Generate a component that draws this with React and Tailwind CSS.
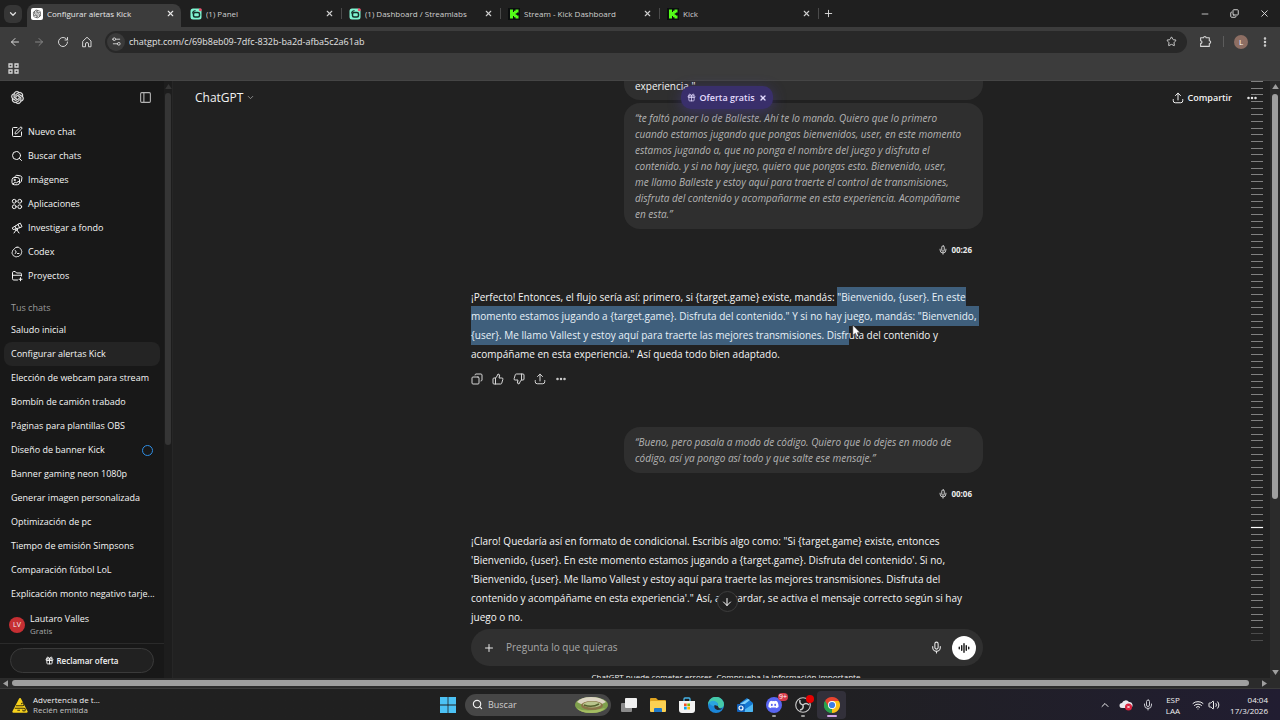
/**
 * ============================================================
 * Escritorio con Chrome abierto en ChatGPT
 * Barra de pestañas, barra de direcciones, chat y barra de tareas.
 * ============================================================
 */
import React, { useState } from "react";
import clsx from "clsx";
import { RiOpenaiFill } from "react-icons/ri";
import { FaDiscord } from "react-icons/fa";
import {
  ArrowDown,
  ArrowLeft,
  ArrowRight,
  ChevronDown,
  ChevronUp,
  Copy,
  Ellipsis,
  EllipsisVertical,
  Gift,
  Mic,
  Minus,
  PanelLeft,
  Plus,
  RotateCw,
  Search,
  Settings2,
  SquarePen,
  Star,
  ThumbsDown,
  ThumbsUp,
  Volume2,
  Wifi,
  X,
} from "lucide-react";

// ─── Datos ───
const TABS = [
  { title: "Configurar alertas Kick", icon: "openai" },
  { title: "(1) Panel", icon: "streamlabs" },
  { title: "(1) Dashboard / Streamlabs", icon: "streamlabs" },
  { title: "Stream - Kick Dashboard", icon: "kick" },
  { title: "Kick", icon: "kick" },
];

const CHATS = [
  "Saludo inicial",
  "Configurar alertas Kick",
  "Elección de webcam para stream",
  "Bombín de camión trabado",
  "Páginas para plantillas OBS",
  "Diseño de banner Kick",
  "Banner gaming neon 1080p",
  "Generar imagen personalizada",
  "Optimización de pc",
  "Tiempo de emisión Simpsons",
  "Comparación fútbol LoL",
  "Explicación monto negativo tarje...",
];

const MARKS = Array.from({ length: 85 }, (_, i) => i);

// ─── Iconos propios ───
function Svg({ children, className = "size-3", ...rest }) {
  return (
    <svg
      viewBox="0 0 24 24"
      fill="none"
      stroke="currentColor"
      strokeWidth="2"
      strokeLinecap="round"
      strokeLinejoin="round"
      className={clsx("shrink-0", className)}
      aria-hidden="true"
      {...rest}
    >
      {children}
    </svg>
  );
}

function ShareIcon() {
  return (
    <Svg>
      <path d="M12 16V2.500M7 7l5-4.700L17 7" />
      <path d="M2.500 15v2.500a4 4 0 0 0 4 4h11a4 4 0 0 0 4-4V15" />
    </Svg>
  );
}

function HomeIcon() {
  return (
    <Svg>
      <path d="M4 10l8-7.500 8 7.500v11.500h-5V16a3 3 0 0 0-6 0v5.500H4z" />
    </Svg>
  );
}

function ExtensionIcon() {
  return (
    <Svg className="size-[13px]">
      <path d="M3 5h5.500a2.300 2.300 0 0 1 4.600 0H19v5.500a2.600 2.600 0 0 1 0 5.200V21H3v-5.500a2.500 2.500 0 0 0 0-5z" />
    </Svg>
  );
}

function ImagesIcon() {
  return (
    <Svg>
      <path d="M8 5.500C8.400 3.600 10 2.400 12 2.700l6.600 1c2.200.4 3.500 2 3.200 4.200l-.9 6.100c-.3 1.800-1.400 2.900-3 3.100" />
      <rect x="2" y="7" width="15" height="14.500" rx="4.500" />
      <circle cx="7.200" cy="12" r="1.300" />
      <path d="M4 19.500l4.500-3 3 1.500 2.500-3.500 3 2" />
    </Svg>
  );
}

function AppsIcon() {
  return (
    <Svg>
      <circle cx="6.500" cy="6.500" r="3.800" />
      <circle cx="17.500" cy="6.500" r="3.800" />
      <circle cx="6.500" cy="17.500" r="3.800" />
      <circle cx="17.500" cy="17.500" r="3.800" />
    </Svg>
  );
}

function TelescopeIcon() {
  return (
    <Svg>
      <path d="M14.500 4.500l4-2.200 3.500 7-4 1.900z" />
      <path d="M14.500 4.500L8 8.500l2.500 5 7.500-2.300M8 8.500l-5.500 3.200 1.800 3.600 6.200-1.800" />
      <circle cx="11" cy="15" r="1.800" />
      <path d="M9.800 16.500L6 22M12.200 16.500L16 22" />
    </Svg>
  );
}

function CodexIcon() {
  return (
    <Svg>
      <path d="M12 2.500c2-.8 4 .1 5 1.700 2 .4 3.400 2 3.300 4 1.500 1.600 1.700 3.900.5 5.600.2 2.100-1 4-3 4.700-.9 1.900-2.900 2.900-4.900 2.500-1.700 1.100-4 .9-5.500-.5-2.100-.1-3.800-1.700-4-3.700-1.500-1.500-1.700-3.800-.6-5.500-.1-2.100 1.200-3.900 3.200-4.500 1.200-2.700 3.600-4.700 6-4.300z" />
      <path d="M8.500 9l2 3-2 3M13 15h3" />
    </Svg>
  );
}

function ProjectsIcon() {
  return (
    <Svg>
      <path d="M13 20H5.500A2.500 2.500 0 0 1 3 17.500v-12A2.500 2.500 0 0 1 5.500 3h3l2.500 3h7.500A2.500 2.500 0 0 1 21 8.500V12" />
      <path d="M3 10.500h18M19 15.500v6M16 18.500h6" />
    </Svg>
  );
}

function Favicon({ name }) {
  if (name === "openai") {
    return (
      <span className="flex size-3 shrink-0 items-center justify-center rounded-xs bg-white text-[#333]">
        <RiOpenaiFill className="size-[10px]" />
      </span>
    );
  }
  if (name === "streamlabs") {
    return (
      <svg viewBox="0 0 24 24" className="size-3 shrink-0" aria-hidden="true">
        <rect x="1" y="1" width="22" height="22" rx="5" fill="#80f5d2" />
        <path d="M5 11a7 7 0 0 1 6-6" stroke="#15302a" strokeWidth="2.500" fill="none" />
        <rect x="7" y="9" width="12" height="9" rx="3" fill="none" stroke="#15302a" strokeWidth="3" />
        <circle cx="20.500" cy="3.500" r="3" fill="#f0506e" />
      </svg>
    );
  }
  return (
    <svg viewBox="0 0 24 24" className="size-3 shrink-0" aria-hidden="true">
      <rect width="24" height="24" fill="#0b0e0f" />
      <path d="M4 3h6v5h2V5.500h3V3h6v6h-3v1.500h-2.500v3H18V15h3v6h-6v-2.500h-3V16h-2v5H4z" fill="#53fc18" />
    </svg>
  );
}

function VoiceBars() {
  return (
    <Svg className="size-3" strokeWidth="2.600">
      <path d="M2.500 10.500v3M7.500 7.500v9M12 3.500v17M16.500 7.500v9M21.500 10.500v3" />
    </Svg>
  );
}

// ─── Navegador ───
function TabStrip() {
  return (
    <header className="flex h-[27px] shrink-0 items-center bg-[#1f1f1f] text-[#dedede]">
      <button aria-label="Buscar pestañas" className="ml-1 mr-[5px] flex size-[18px] shrink-0 items-center justify-center rounded-md bg-[#363636]">
        <ChevronDown className="size-[10px]" strokeWidth={3} />
      </button>
      {TABS.map((tab, i) => (
        <div key={tab.title} className="flex h-full w-[159px] min-w-0 items-end">
          <div
            className={clsx(
              "flex h-[23px] w-[154px] items-center rounded-t-lg pb-1 pl-1 pr-1.5 text-[8px]",
              i === 0 ? "bg-[#3c3c3c] text-[#e8e8e8]" : "text-[#cfcfcf]"
            )}
          >
            <Favicon name={tab.icon} />
            <span className="ml-1 flex-1 truncate">{tab.title}</span>
            <button aria-label={`Cerrar ${tab.title}`}>
              <X className="size-[9px]" strokeWidth={3} />
            </button>
          </div>
          {i > 0 && <span className="mb-2 ml-px h-[11px] w-px bg-[#4a4a4a]" />}
        </div>
      ))}
      <button aria-label="Nueva pestaña" className="ml-px">
        <Plus className="size-[11px]" strokeWidth={2} />
      </button>
      <div className="ml-auto mr-[10px] flex items-center gap-5">
        <button aria-label="Minimizar"><Minus className="size-[10px]" /></button>
        <button aria-label="Restaurar"><Copy className="size-[9px] -scale-x-100 rotate-180" strokeWidth={2.5} /></button>
        <button aria-label="Cerrar"><X className="size-[11px]" /></button>
      </div>
    </header>
  );
}

function Toolbar() {
  return (
    <div className="shrink-0 border-b border-[#454545] bg-[#3c3c3c] text-[#d6d6d6]">
      <div className="flex h-[29px] items-center pl-[9px] pr-[9px]">
        <div className="flex items-center gap-3">
          <button aria-label="Atrás"><ArrowLeft className="size-3" /></button>
          <button aria-label="Adelante" className="text-[#858585]"><ArrowRight className="size-3" /></button>
          <button aria-label="Recargar"><RotateCw className="size-3" /></button>
          <button aria-label="Inicio"><HomeIcon /></button>
        </div>
        <label className="ml-3 flex h-[22px] flex-1 items-center rounded-full bg-[#282828] pl-0.5">
          <span className="flex size-[18px] items-center justify-center rounded-full bg-[#3a3a3a]">
            <Settings2 className="size-[11px] rotate-180" />
          </span>
          <input
            aria-label="Dirección"
            defaultValue="chatgpt.com/c/69b8eb09-7dfc-832b-ba2d-afba5c2a61ab"
            className="ml-1 flex-1 bg-transparent text-[9px] text-[#e3e3e3] outline-none"
          />
          <button aria-label="Añadir a favoritos" className="mr-[10px]">
            <Star className="size-[11px]" />
          </button>
        </label>
        <button aria-label="Extensiones" className="ml-3"><ExtensionIcon /></button>
        <span className="ml-[11px] mr-[10px] h-[11px] w-px bg-[#5c5c5c]" />
        <button aria-label="Perfil" className="flex size-[14px] items-center justify-center rounded-full bg-[#8d6e63] text-[8px] text-white">
          L
        </button>
        <button aria-label="Menú" className="ml-[11px]"><EllipsisVertical className="size-3" strokeWidth={3} /></button>
      </div>
      <div className="flex h-6 items-center pl-2">
        <button aria-label="Aplicaciones">
          <svg viewBox="0 0 11 11" className="size-[11px]" fill="none" stroke="currentColor" strokeWidth="1.300" aria-hidden="true">
            <path d="M1 1h3v3h-3zM7 1h3v3h-3zM1 7h3v3h-3zM7 7h3v3h-3z" />
          </svg>
        </button>
      </div>
    </div>
  );
}

// ─── Barra lateral ───
const NAV = [
  { label: "Nuevo chat", icon: <SquarePen className="size-3" /> },
  { label: "Buscar chats", icon: <Search className="size-3" /> },
  { label: "Imágenes", icon: <ImagesIcon /> },
  { label: "Aplicaciones", icon: <AppsIcon /> },
  { label: "Investigar a fondo", icon: <TelescopeIcon /> },
  { label: "Codex", icon: <CodexIcon /> },
  { label: "Proyectos", icon: <ProjectsIcon /> },
];

function Sidebar() {
  return (
    <aside className="flex w-[173px] shrink-0 border-r border-[#262626] bg-[#181818] text-[9px] text-[#f5f5f5]">
      <div className="flex min-w-0 flex-1 flex-col">
        <div className="flex h-[33px] items-center justify-between pl-[10px] pr-3">
          <RiOpenaiFill className="size-[15px]" stroke="currentColor" strokeWidth=".5" />
          <button aria-label="Cerrar barra lateral" className="text-[#b4b4b4]">
            <PanelLeft className="size-[13px]" />
          </button>
        </div>
        <nav className="mt-1.5 px-1">
          {NAV.map((item) => (
            <a key={item.label} href="#" className="flex h-6 items-center gap-[5px] pl-[7px]">
              {item.icon}
              {item.label}
            </a>
          ))}
        </nav>
        <h2 className="mt-1.5 flex h-5 items-end pl-[11px] text-[#9b9b9b]">Tus chats</h2>
        <nav className="mt-1 flex-1 px-1">
          {CHATS.map((chat) => (
            <a
              key={chat}
              href="#"
              className={clsx(
                "flex h-6 items-center justify-between whitespace-nowrap rounded-lg px-[7px]",
                chat === "Configurar alertas Kick" && "bg-[#242424]"
              )}
            >
              {chat}
              {chat === "Diseño de banner Kick" && (
                <span className="size-[11px] rounded-full border border-[#2f8fe6]" />
              )}
            </a>
          ))}
        </nav>
        <button className="flex items-center gap-[5px] border-b border-[#2a2a2a] py-[6px] pl-[9px] text-left">
          <span className="flex size-4 items-center justify-center rounded-full bg-[#c62f33] text-[7px]">LV</span>
          <span>
            <span className="block leading-3">Lautaro Valles</span>
            <span className="block text-[8px] leading-3 text-[#a6a6a6]">Gratis</span>
          </span>
        </button>
        <button className="mx-[10px] mb-[5px] mt-1 flex h-[25px] items-center justify-center gap-[2px] rounded-full border border-[#3a3a3a] bg-[#212121] text-[8px] font-semibold">
          <Gift className="size-[9px]" strokeWidth={2.5} />
          Reclamar oferta
        </button>
      </div>
      <div className="flex w-2 flex-col items-center gap-1 bg-[#1d1d1d] pt-[3px]">
        <Triangle className="text-[#353535]" />
        <span className="h-[352px] w-1.5 rounded-full bg-[#353535]" />
      </div>
    </aside>
  );
}

function Triangle({ className }) {
  return (
    <svg viewBox="0 0 8 6" className={clsx("h-[5px] w-[7px] shrink-0", className)} fill="currentColor" aria-hidden="true">
      <path d="M4 0l4 6H0z" />
    </svg>
  );
}

// ─── Conversación ───
function Bubble({ children }) {
  return (
    <div className="ml-auto w-[359px] rounded-2xl bg-[#2f2f2f] px-[11px] py-[7px] text-[10px] italic leading-4 text-[#b4b4b4]">
      {children}
    </div>
  );
}

function VoiceTime({ time }) {
  return (
    <p className="mt-[13px] flex h-4 items-center justify-end gap-[3px] pr-[11px] text-[8px] font-bold text-[#ececec]">
      <Mic className="size-[10px]" />
      {time}
    </p>
  );
}

function Mark({ children }) {
  return <mark className="bg-[#3f5f7c] py-[3px] text-[#e8f1f8]">{children}</mark>;
}

function Messages() {
  return (
    <div className="mx-auto flex w-[512px] flex-col whitespace-nowrap text-[10px] text-[#f5f5f5]">
      <div className="ml-auto flex h-[19px] w-[359px] items-end rounded-b-2xl bg-[#2f2f2f] px-[11px] pb-[6px] leading-4">
        experiencia."
      </div>
      <div className="mt-[3px] flex">
        <Bubble>
          “te faltó poner lo de Balleste. Ahí te lo mando. Quiero que lo primero<br />
          cuando estamos jugando que pongas bienvenidos, user, en este momento<br />
          estamos jugando a, que no ponga el nombre del juego y disfruta el<br />
          contenido. y si no hay juego, quiero que pongas esto. Bienvenido, user,<br />
          me llamo Balleste y estoy aquí para traerte el control de transmisiones,<br />
          disfruta del contenido y acompañarme en esta experiencia. Acompáñame<br />
          en esta.”
        </Bubble>
      </div>
      <VoiceTime time="00:26" />

      <p className="mt-[30px] leading-[19px]">
        ¡Perfecto! Entonces, el flujo sería así: primero, si {"{target.game}"} existe, mandás:{" "}
        <Mark>"Bienvenido, {"{user}"}. En este</Mark><br />
        <Mark>momento estamos jugando a {"{target.game}"}. Disfruta del contenido." Y si no hay juego, mandás: "Bienvenido,&nbsp;</Mark><br />
        <Mark>{"{user}"}. Me llamo Vallest y estoy aquí para traerte las mejores transmisiones. Disfr</Mark>uta del contenido y<br />
        acompáñame en esta experiencia." Así queda todo bien adaptado.
      </p>
      <div className="mt-[7px] flex h-4 items-center gap-[9px] text-[#d6d6d6]">
        <button aria-label="Copiar"><Copy className="size-3 -scale-x-100" /></button>
        <button aria-label="Buena respuesta"><ThumbsUp className="size-3" /></button>
        <button aria-label="Mala respuesta"><ThumbsDown className="size-3" /></button>
        <button aria-label="Compartir respuesta"><ShareIcon /></button>
        <button aria-label="Más acciones"><Ellipsis className="size-3" strokeWidth={3} /></button>
      </div>

      <div className="mt-10 flex">
        <Bubble>
          “Bueno, pero pasala a modo de código. Quiero que lo dejes en modo de<br />
          código, así ya pongo así todo y que salte ese mensaje.”
        </Bubble>
      </div>
      <VoiceTime time="00:06" />

      <p className="mt-[30px] leading-[19px]">
        ¡Claro! Quedaría así en formato de condicional. Escribís algo como: "Si {"{target.game}"} existe, entonces<br />
        'Bienvenido, {"{user}"}. En este momento estamos jugando a {"{target.game}"}. Disfruta del contenido'. Si no,<br />
        'Bienvenido, {"{user}"}. Me llamo Vallest y estoy aquí para traerte las mejores transmisiones. Disfruta del<br />
        contenido y acompáñame en esta experiencia'." Así, al guardar, se activa el mensaje correcto según si hay<br />
        juego o no.
      </p>
    </div>
  );
}

function Chat() {
  const [draft, setDraft] = useState("");

  return (
    <main className="relative flex min-w-0 flex-1 flex-col bg-[#212121] pl-[11px]">
      {/* Conversación desplazada */}
      <div className="min-h-0 flex-1 overflow-hidden">
        <Messages />
      </div>

      {/* Cuadro de mensaje */}
      <label className="mx-auto flex h-[37px] w-[512px] shrink-0 items-center rounded-full bg-[#303030] pl-3 pr-[7px] text-[#e8e8e8]">
        <Plus className="size-3" />
        <input
          aria-label="Mensaje"
          value={draft}
          onChange={(e) => setDraft(e.target.value)}
          placeholder="Pregunta lo que quieras"
          className="ml-[11px] flex-1 bg-transparent text-[10px] outline-none placeholder:text-[#a8a8a8]"
        />
        <button aria-label="Dictar"><Mic className="size-[13px]" /></button>
        <button aria-label="Modo de voz" className="ml-[9px] flex size-6 items-center justify-center rounded-full bg-white text-black">
          <VoiceBars />
        </button>
      </label>
      <p className="mt-1 h-2 shrink-0 overflow-hidden text-center text-[8px] leading-[14px] text-[#f2f2f2]">
        ChatGPT puede cometer errores. Comprueba la información importante.
      </p>

      {/* Cabecera superpuesta */}
      <div className="absolute inset-x-0 top-0 flex h-[33px] items-center justify-between pl-[22px] pr-3 text-[#f2f2f2]">
        <button className="flex items-center gap-[3px] text-xs">
          ChatGPT <ChevronDown className="size-[9px] text-[#a8a8a8]" />
        </button>
        <div className="flex items-center gap-[14px]">
          <button className="flex items-center gap-1 text-[9px] font-semibold">
            <ShareIcon /> Compartir
          </button>
          <button aria-label="Más opciones"><Ellipsis className="size-3" strokeWidth={3} /></button>
        </div>
      </div>
      <div className="absolute inset-x-0 top-[5px] flex justify-center pl-[11px]">
        <div className="flex h-[23px] items-center rounded-[10px] bg-[#392f6b] px-1.5 text-[9px] font-semibold text-[#e4dcff] shadow-[0_3px_14px_rgba(75,60,170,0.45)]">
          <Gift className="mr-[3px] size-[9px]" />
          Oferta gratis
          <button aria-label="Cerrar oferta" className="ml-1"><X className="size-2" strokeWidth={4} /></button>
        </div>
      </div>
      <div className="absolute inset-x-0 bottom-[66px] flex justify-center pl-[11px]">
        <button aria-label="Ir al final" className="flex size-[21px] items-center justify-center rounded-full border border-[#3d3d3d] bg-[#212121] text-white">
          <ArrowDown className="size-3" />
        </button>
      </div>

      {/* Índice de mensajes */}
      <div className="absolute right-[7px] top-0 flex h-[561px] w-3 flex-col justify-between">
        {MARKS.map((i) => (
          <span
            key={i}
            className={clsx(
              "h-px shrink-0",
              i === 67 ? "bg-white shadow-[0_0_1px_#fff]" : i > 82 ? "bg-[#4c4c4c]" : "bg-[#808080]"
            )}
          />
        ))}
      </div>
    </main>
  );
}

// ─── Barra de tareas ───
function TaskApp({ label, children, active, running }) {
  return (
    <button
      aria-label={label}
      className={clsx(
        "relative flex h-7 w-[29px] items-center justify-center rounded-sm",
        active && "bg-[#32303a]"
      )}
    >
      {children}
      {running && (
        <span
          className={clsx(
            "absolute bottom-0.5 h-0.5 rounded-full",
            active ? "w-[10px] bg-[#d3a6e8]" : "w-1 bg-[#9a9a9a]"
          )}
        />
      )}
    </button>
  );
}

function Taskbar() {
  return (
    <footer className="grid h-8 shrink-0 grid-cols-[1fr_auto_1fr] items-center border-t border-[#3b3b3b] bg-linear-to-r from-[#202020] from-60% to-[#211d31] text-[8px] text-[#f0f0f0]">
      <div className="flex items-center gap-[5px] pl-3">
        <svg viewBox="0 0 24 24" className="size-4" aria-hidden="true">
          <path d="M12 3l10 19H2z" fill="#f7d21c" stroke="#f7d21c" strokeWidth="3" strokeLinejoin="round" />
          <path d="M6 13h10a2 2 0 1 0-2-2M4 17h14a2 2 0 1 1-2 2M8 20h4" stroke="#3c3410" strokeWidth="1.600" fill="none" />
        </svg>
        <p className="leading-[10px]">
          Advertencia de t...<br />
          <span className="text-[#c4c4c4]">Recién emitida</span>
        </p>
      </div>

      <div className="flex items-center">
        <button aria-label="Inicio" className="flex w-7 justify-center">
          <svg viewBox="0 0 16 16" className="size-4" fill="#4cc2f5" aria-hidden="true">
            <path d="M0 0h7.600v7.600H0zM8.400 0H16v7.600H8.400zM0 8.400h7.600V16H0zM8.400 8.400H16V16H8.400z" />
          </svg>
        </button>
        <label className="mx-[3px] flex h-[22px] w-[146px] items-center rounded-full bg-[#464646] pl-[7px] pr-[3px]">
          <Search className="size-[11px]" strokeWidth={2.5} />
          <input
            aria-label="Buscar en Windows"
            placeholder="Buscar"
            className="ml-[5px] w-0 flex-1 bg-transparent text-[9px] outline-none placeholder:text-[#cfcfcf]"
          />
          <svg viewBox="0 0 33 16" className="h-4 w-[33px]" aria-hidden="true">
            <ellipse cx="16.500" cy="8" rx="16.500" ry="8" fill="#7fa04c" />
            <path d="M2 5Q6 0 16 0t15 5l-4 2H6z" fill="#dcd5c3" />
            <ellipse cx="17" cy="8.500" rx="11" ry="4.500" fill="#8a7449" />
            <ellipse cx="17" cy="7.500" rx="9" ry="3" fill="#b9c48c" />
            <path d="M9 8q8 3 15-1" stroke="#55612e" strokeWidth="1.500" fill="none" />
            <path d="M2 11q8 5 28 0-3 5-14 5T2 11z" fill="#a5bd63" />
          </svg>
        </label>
        <TaskApp label="Vista de tareas">
          <svg viewBox="0 0 16 16" className="size-4" aria-hidden="true">
            <rect x="0" y="6" width="11" height="9" rx="1" fill="#8a8a8a" />
            <rect x="4" y="1" width="12" height="10" rx="1" fill="#f0f0f0" />
          </svg>
        </TaskApp>
        <TaskApp label="Explorador de archivos">
          <svg viewBox="0 0 16 16" className="size-4" aria-hidden="true">
            <path d="M0 2q0-1 1-1h5l2 2h7q1 0 1 1v4H0z" fill="#e0a420" />
            <rect x="0" y="4" width="16" height="11" rx="1" fill="#fbd052" />
            <path d="M4 15v-3q0-1 1-1h6q1 0 1 1v3z" fill="#1f78c8" />
          </svg>
        </TaskApp>
        <TaskApp label="Microsoft Store">
          <svg viewBox="0 0 16 16" className="size-4" aria-hidden="true">
            <path d="M5 4V2q0-1 1-1h4q1 0 1 1v2" fill="none" stroke="#45b4e8" strokeWidth="1.300" />
            <path d="M0 4h16v9q0 3-3 3H3q-3 0-3-3z" fill="#f3f3f3" />
            <path d="M5 6.500h2.700v2.700H5z" fill="#f25022" />
            <path d="M8.300 6.500H11v2.700H8.300z" fill="#7fba00" />
            <path d="M5 9.800h2.700v2.700H5z" fill="#00a4ef" />
            <path d="M8.300 9.800H11v2.700H8.300z" fill="#ffb900" />
          </svg>
        </TaskApp>
        <TaskApp label="Edge">
          <svg viewBox="0 0 16 16" className="size-4" aria-hidden="true">
            <circle cx="8" cy="8" r="8" fill="#1b86d8" />
            <path d="M0 8A8 8 0 0 1 16 7.500C16 10 14 11 12 11c-2 0-2.500-1-2-2C10.500 6 8 4.500 5.500 4.500 3 4.500 1 6 0 8z" fill="#45c9a8" />
            <path d="M1 5.500Q5 2 9 5.500q1 1.500.5 3.500H5Q2 8 1 5.500z" fill="#2aa5e0" />
            <path d="M6.500 8q-1 4 3 5 3 0 5-1.500-4 .5-4.700-2.500z" fill="#25262c" />
          </svg>
        </TaskApp>
        <TaskApp label="Outlook">
          <svg viewBox="0 0 16 16" className="size-4" aria-hidden="true">
            <path d="M3 6l7-5 6 5v8q0 1-1 1H4z" fill="#1479d2" />
            <path d="M3 7l8-5 2 1-9 7z" fill="#7fd0fa" />
            <path d="M4 15l12-8v7q0 1-1 1z" fill="#4cb6f2" />
            <rect x="0" y="7" width="8" height="8" rx="1" fill="#1261b8" />
            <circle cx="4" cy="11" r="2" fill="none" stroke="#fff" strokeWidth="1.200" />
          </svg>
        </TaskApp>
        <TaskApp label="Discord" running>
          <span className="flex size-4 items-center justify-center rounded-full bg-[#5865f2] text-white">
            <FaDiscord className="size-[11px]" />
          </span>
          <span className="absolute right-0 top-0.5 flex h-2 items-center rounded-full bg-[#d63a4a] px-px text-[7px] leading-none text-white">9+</span>
        </TaskApp>
        <TaskApp label="OBS" running>
          <svg viewBox="0 0 16 16" className="size-4" aria-hidden="true">
            <circle cx="8" cy="8" r="7.300" fill="#1d1d1f" stroke="#c9c9c9" strokeWidth="1.100" />
            <path d="M8 8Q4 7 5 3M8 8q3-3 6 0M8 8q1 4-3 5" fill="none" stroke="#c9c9c9" strokeWidth="1.500" />
          </svg>
          <span className="absolute right-[3px] top-1 size-2 rounded-full bg-[#e80000]" />
        </TaskApp>
        <TaskApp label="Chrome" active running>
          <svg viewBox="0 0 16 16" className="size-4" aria-hidden="true">
            <path d="M8 8L1.070 4A8 8 0 0 1 14.930 4z" fill="#e8442f" />
            <path d="M8 8L14.930 4A8 8 0 0 1 8 16z" fill="#fbc116" />
            <path d="M8 8V16A8 8 0 0 1 1.070 4z" fill="#2ba24c" />
            <path d="M8 4h6.930L11.500 10z" fill="#fbc116" />
            <path d="M4.500 10L1.070 4 8 4z" fill="#e8442f" />
            <path d="M1.070 4l3.430 6L8 12l-2 3.800A8 8 0 0 1 1.070 4z" fill="#2ba24c" />
            <circle cx="8" cy="8" r="4" fill="#fff" />
            <circle cx="8" cy="8" r="3.100" fill="#3c7de6" />
          </svg>
        </TaskApp>
      </div>

      <div className="flex items-center justify-end pr-3">
        <ChevronUp className="size-3" />
        <svg viewBox="0 0 14 12" className="ml-2 h-3 w-[14px]" aria-hidden="true">
          <path d="M3 9a2.500 2.500 0 0 1 0-5 4 4 0 0 1 7-1 3 3 0 0 1 1 6z" fill="#e9e9ee" />
          <circle cx="9.500" cy="8" r="3.500" fill="#d8203c" />
          <path d="M8.300 6.800l2.400 2.400M10.700 6.800L8.300 9.200" stroke="#fff" strokeWidth=".9" />
        </svg>
        <Mic className="ml-[9px] size-3 text-[#c9c9d0]" />
        <p className="ml-3 text-center leading-[11px]">ESP<br />LAA</p>
        <Wifi className="ml-3 size-3" />
        <Volume2 className="ml-1 size-3" />
        <p className="ml-[10px] text-right leading-[11px]">04:04<br />17/3/2026</p>
      </div>
    </footer>
  );
}

function App() {
  return (
    <div className="relative flex h-screen flex-col overflow-hidden bg-[#1f1f1f] font-['Open_Sans',sans-serif]">
      <TabStrip />
      <Toolbar />
      <div className="flex min-h-0 flex-1">
        <Sidebar />
        <Chat />
        {/* Barra de desplazamiento vertical */}
        <div className="flex w-[10px] shrink-0 flex-col items-center bg-[#2b2b2b] py-[3px] text-[#9f9f9f]">
          <Triangle />
          <span className="mt-[5px] h-[405px] w-1.5 rounded-full bg-[#9f9f9f]" />
          <Triangle className="mt-auto rotate-180" />
        </div>
      </div>
      {/* Barra de desplazamiento horizontal */}
      <div className="flex h-[10px] shrink-0 items-center bg-[#2b2b2b] pl-0.5 pr-3 text-[#9f9f9f]">
        <Triangle className="-rotate-90" />
        <span className="ml-[3px] mr-3 h-1.5 flex-1 rounded-full bg-[#9f9f9f]" />
        <Triangle className="rotate-90" />
      </div>
      <Taskbar />

      {/* Puntero del ratón */}
      <svg viewBox="0 0 12 18" className="pointer-events-none absolute left-[852px] top-[324px] h-[14px] w-[9px]" aria-hidden="true">
        <path d="M1 1v14l3.500-3 2 5 2.500-1-2-4.700H11z" fill="#fff" stroke="#222" strokeWidth=".8" />
      </svg>
    </div>
  );
}

export default App;
